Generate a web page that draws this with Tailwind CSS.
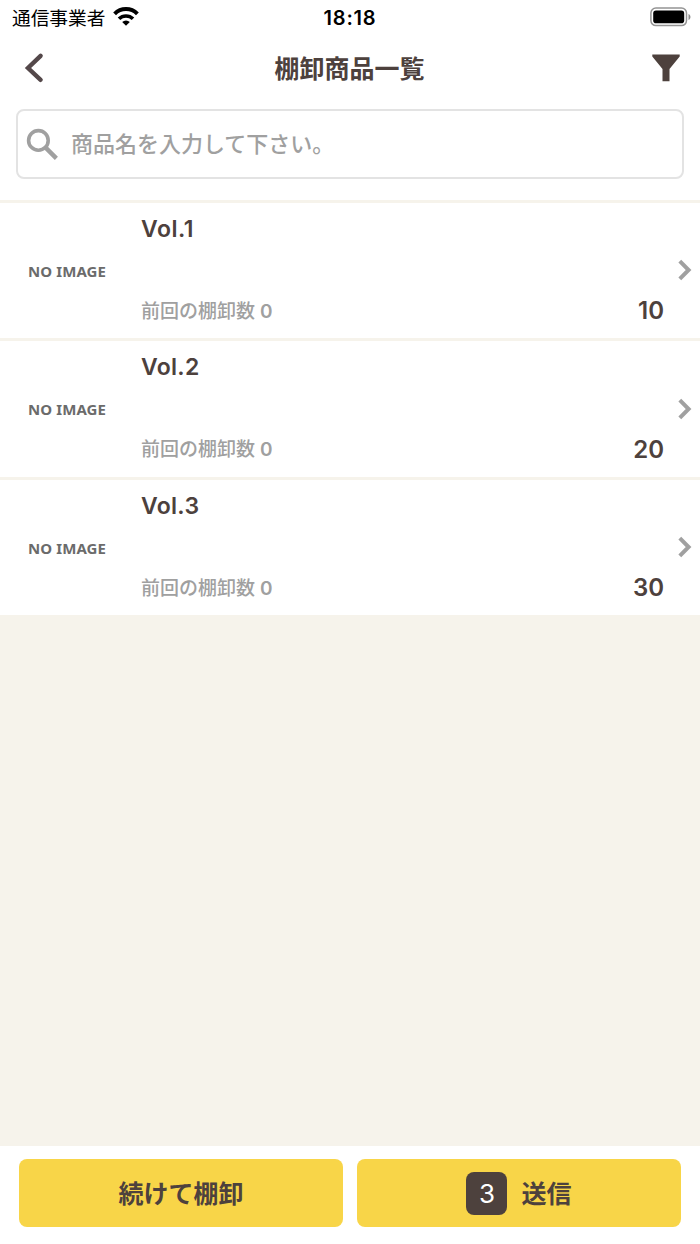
<!DOCTYPE html>
<html lang="ja">
<head>
  <meta charset="UTF-8" />
  <title>棚卸商品一覧</title>
  <script src="https://cdn.jsdelivr.net/npm/@tailwindcss/browser@4"></script>
</head>
<body class="h-[1244px] flex flex-col overflow-hidden bg-[#f6f3eb] text-[#4d413d] font-['Inter','Noto_Sans_CJK_JP',sans-serif]">
  <!-- Status bar -->
  <div class="h-9 shrink-0 bg-white text-black grid grid-cols-3 items-center pl-3 pr-[9px]">
    <div class="h-9 flex items-center gap-2">
      <span class="text-[18.7px] leading-8 pt-[2px] whitespace-nowrap">通信事業者</span>
      <svg class="w-[26px] h-[19px] mt-[-3px]" viewBox="0 0 26 19">
        <path d="M1.6 6.8a16.2 16.2 0 0 1 22.8 0" fill="none" stroke="#000" stroke-width="4" />
        <path d="M6 11.8a10 10 0 0 1 14 0" fill="none" stroke="#000" stroke-width="3.6" />
        <path d="M13 18.8l-3.8-3.9a5.5 5.5 0 0 1 7.6 0z" />
      </svg>
    </div>
    <div class="text-center text-[20px] font-semibold tracking-[0.8px] pr-[3px]">18:18</div>
    <svg class="justify-self-end w-[41px] h-5 mt-[-2px]" viewBox="0 0 41 20">
      <rect x="0.9" y="1" width="35.6" height="17.6" rx="5" fill="#fff" stroke="#949494" stroke-width="1.5" />
      <rect x="3.2" y="3.6" width="31" height="12.6" rx="2.8" />
      <path d="M38.5 7c2.6 1 2.6 5 0 6z" fill="#8a8a8a" />
    </svg>
  </div>

  <!-- Header -->
  <div class="h-16 shrink-0 bg-white flex justify-between items-center pl-6 pr-5">
    <svg class="w-6 h-8" viewBox="0 0 24 32" fill="none" stroke="#54484a" stroke-width="4.4" stroke-linecap="round">
      <path d="M16.6 3.8L4 16l12.6 11.8" />
    </svg>
    <h1 class="text-[25px] font-bold leading-8 pt-[2px] pr-px">棚卸商品一覧</h1>
    <svg class="w-7 h-7" viewBox="0 0 28 28" fill="#4d413d">
      <path d="M0.3 0.5h27.4v2L17.5 15v12.3h-7V15L0.3 2.5z" />
    </svg>
  </div>

  <!-- Search -->
  <div class="h-[99.5px] shrink-0 bg-white px-4 pt-[9px]">
    <div class="h-[70px] border-2 border-[#e3e3e3] rounded-lg flex items-center gap-3 pl-2">
      <svg class="w-[33px] h-[33px]" viewBox="0 0 33 33" fill="none" stroke="#a0a0a0">
        <circle cx="12.4" cy="12.4" r="9.8" stroke-width="3.6" />
        <path d="M19.6 19.6L30.4 30.4" stroke-width="4.4" />
      </svg>
      <span class="text-[22px] font-medium text-[#a0a0a0] pt-px">商品名を入力して下さい。</span>
    </div>
  </div>

  <!-- Product list -->
  <div class="shrink-0">
    <div class="h-[138.5px] border-t-3 border-[#f6f3eb] bg-white flex items-center">
      <div class="w-[141px] pl-7 pt-px text-[15px] tracking-[0.1px] font-bold text-[#6b6b6b] font-['Noto_Sans']">NO IMAGE</div>
      <div class="flex-1 h-full flex flex-col justify-between pt-[10px] pb-[10.5px]">
        <div class="text-[23px] font-semibold leading-8 tracking-[0.5px]">Vol.1</div>
        <div class="text-[19px] font-medium leading-8 text-[#a0a0a0]">前回の棚卸数 <span class="font-semibold">0</span></div>
      </div>
      <div class="self-end pb-[11px] text-[24px] font-semibold leading-8">10</div>
      <svg class="w-[14px] h-[22px] ml-[14px] mr-2" viewBox="0 0 14 22" fill="none" stroke="#a0a0a0" stroke-width="4">
        <path d="M1.8 2.2L10.6 11l-8.8 8.8" />
      </svg>
    </div>
    <div class="h-[138.5px] border-t-3 border-[#f6f3eb] bg-white flex items-center">
      <div class="w-[141px] pl-7 pt-px text-[15px] tracking-[0.1px] font-bold text-[#6b6b6b] font-['Noto_Sans']">NO IMAGE</div>
      <div class="flex-1 h-full flex flex-col justify-between pt-[10px] pb-[10.5px]">
        <div class="text-[23px] font-semibold leading-8 tracking-[0.3px]">Vol.2</div>
        <div class="text-[19px] font-medium leading-8 text-[#a0a0a0]">前回の棚卸数 <span class="font-semibold">0</span></div>
      </div>
      <div class="self-end pb-[11px] text-[24px] font-semibold leading-8">20</div>
      <svg class="w-[14px] h-[22px] ml-[14px] mr-2" viewBox="0 0 14 22" fill="none" stroke="#a0a0a0" stroke-width="4">
        <path d="M1.8 2.2L10.6 11l-8.8 8.8" />
      </svg>
    </div>
    <div class="h-[138.5px] border-t-3 border-[#f6f3eb] bg-white flex items-center">
      <div class="w-[141px] pl-7 pt-px text-[15px] tracking-[0.1px] font-bold text-[#6b6b6b] font-['Noto_Sans']">NO IMAGE</div>
      <div class="flex-1 h-full flex flex-col justify-between pt-[10px] pb-[10.5px]">
        <div class="text-[23px] font-semibold leading-8 tracking-[0.3px]">Vol.3</div>
        <div class="text-[19px] font-medium leading-8 text-[#a0a0a0]">前回の棚卸数 <span class="font-semibold">0</span></div>
      </div>
      <div class="self-end pb-[11px] text-[24px] font-semibold leading-8">30</div>
      <svg class="w-[14px] h-[22px] ml-[14px] mr-2" viewBox="0 0 14 22" fill="none" stroke="#a0a0a0" stroke-width="4">
        <path d="M1.8 2.2L10.6 11l-8.8 8.8" />
      </svg>
    </div>
  </div>

  <!-- Footer buttons -->
  <div class="mt-auto h-[98px] shrink-0 bg-white grid grid-cols-2 gap-[14px] px-[19px] pt-[13px] pb-[17px]">
    <button class="bg-[#f8d548] rounded-lg text-[25px] font-bold pt-[3px]">続けて棚卸</button>
    <button class="bg-[#f8d548] rounded-lg text-[25px] font-bold flex items-center justify-center gap-[14px]">
      <span class="w-[41px] h-[43px] rounded-lg bg-[#4d413d] text-white text-[26px] font-normal flex items-center justify-center">3</span>
      <span class="pt-[3px]">送信</span>
    </button>
  </div>
</body>
</html>
